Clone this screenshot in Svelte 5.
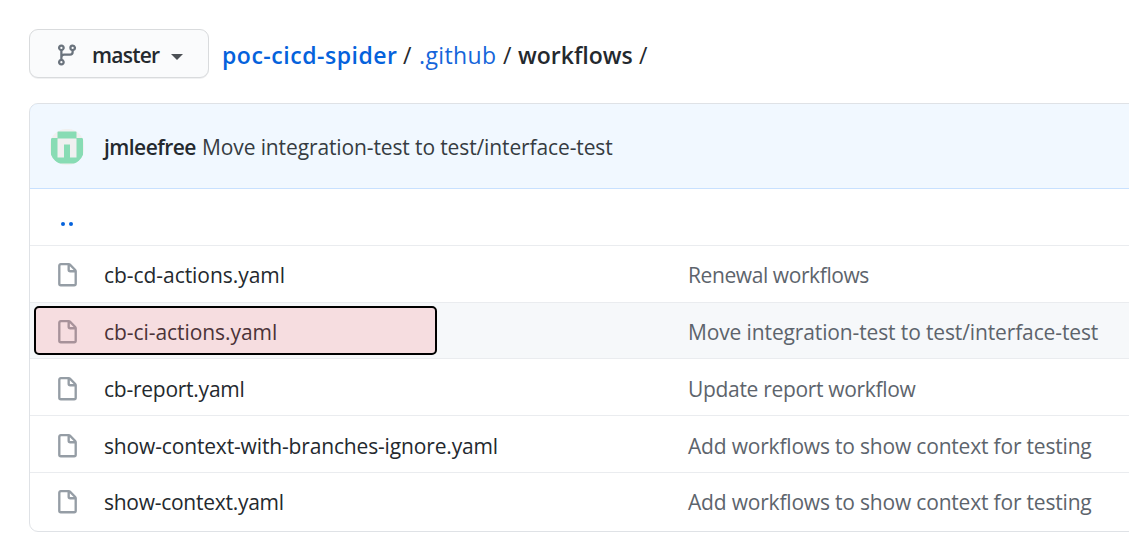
<script>
  const files = [
    { name: 'cb-cd-actions.yaml', message: 'Renewal workflows', ns: -0.05, ms: -0.41 },
    { name: 'cb-ci-actions.yaml', message: 'Move integration-test to test/interface-test', ns: -0.06, ms: -0.13, active: true },
    { name: 'cb-report.yaml', message: 'Update report workflow', ns: -0.25, ms: -0.32 },
    { name: 'show-context-with-branches-ignore.yaml', message: 'Add workflows to show context for testing', ns: -0.155, ms: -0.19 },
    { name: 'show-context.yaml', message: 'Add workflows to show context for testing', ns: -0.27, ms: -0.19 }
  ];
</script>

<main>
  <nav>
    <button>
      <svg class="branch" viewBox="0 0 16 16"><path fill-rule="evenodd" d="M11.75 2.5a.75.75 0 100 1.5.75.75 0 000-1.5zm-2.25.75a2.25 2.25 0 113 2.122V6A2.5 2.5 0 0110 8.5H6a1 1 0 00-1 1v1.128a2.251 2.251 0 11-1.5 0V5.372a2.25 2.25 0 111.5 0v1.836A2.492 2.492 0 016 7h4a1 1 0 001-1v-.628A2.25 2.25 0 019.5 3.25zM4.25 12a.75.75 0 100 1.5.75.75 0 000-1.5zM3.5 3.25a.75.75 0 111.5 0 .75.75 0 01-1.5 0z" /></svg>
      <b class="master">master</b>
      <i class="caret"></i>
    </button>
    <div class="crumbs">
      <a class="repo" href="#repo">poc-cicd-spider</a><span class="s1">/</span><a class="dir" href="#github">.github</a><span class="s2">/</span><b class="current">workflows</b><span class="s3">/</span>
    </div>
  </nav>

  <section>
    <header>
      <svg class="avatar" viewBox="0 0 34 36">
        <clipPath id="round"><rect width="34" height="36" rx="16" /></clipPath>
        <g clip-path="url(#round)">
          <rect width="34" height="36" fill="#f0f0f0" />
          <path fill="#88dcb4" d="M7.500 2.500h19v6.500h6.500v19.500l-6.500 6h-19l-6.500-6v-19.500h6.500zM7.500 9.500v19h6.500v-13h6v13h6.500v-19z" fill-rule="evenodd" />
        </g>
      </svg>
      <b class="author">jmleefree</b><span class="commit">Move integration-test to test/interface-test</span>
    </header>
    <div class="row up"><a href="#up" aria-label="Parent directory"><i></i><i></i></a></div>
    {#each files as f}
      <div class="row" class:active={f.active}>
        {#if f.active}<div class="mark"></div>{/if}
        <svg class="file" viewBox="0 0 16 16"><path fill-rule="evenodd" d="M3.75 1.5a.25.25 0 00-.25.25v11.500c0 .138.112.25.25.25h8.500a.25.25 0 00.25-.25V6H9.750A1.75 1.75 0 018 4.250V1.500H3.750zm5.750.56v2.190c0 .138.112.25.25.25h2.190L9.500 2.060zM2 1.750C2 .784 2.784 0 3.750 0h5.086c.464 0 .909.184 1.237.513l3.414 3.414c.329.328.513.773.513 1.237v8.086A1.750 1.750 0 0112.250 15h-8.500A1.750 1.750 0 012 13.250V1.750z" /></svg>
        <span class="name" style:letter-spacing="{f.ns}px">{f.name}</span>
        <span class="message" style:letter-spacing="{f.ms}px">{f.message}</span>
      </div>
    {/each}
  </section>
</main>

<style>
  :global(body) { background: #fff; overflow: hidden; }
  main { box-sizing: border-box; height: 535px; padding: 29px 0 0 29px; overflow: hidden; font: 21px/30px "Open Sans", "Noto Sans", sans-serif; color: #24292e; white-space: nowrap; }
  a { color: #0366d6; text-decoration: none; }
  b { font-weight: 600; }
  nav { display: flex; height: 50px; }
  button { box-sizing: border-box; display: flex; align-items: center; width: 180px; height: 49px; padding: 3px 0 0 25px; border: 1px solid #d9dbdd; border-radius: 9px; background: #fafbfc; box-shadow: 0 1px 0 #f0f1f2; font: inherit; color: inherit; }
  .branch { width: 24px; height: 24px; fill: #6a737d; }
  .master { width: 68px; margin-left: 13px; text-align: left; letter-spacing: -.75px; }
  .caret { margin: 4px 0 0 11px; border: 6px solid transparent; border-top-color: #4c5055; border-bottom: 0; }
  .crumbs { display: flex; align-items: center; margin-left: 13px; padding-top: 2px; font-size: 23px; }
  .repo { width: 181px; font-weight: 600; letter-spacing: .53px; color: #0562dc; }
  .s1 { width: 16px; }
  .dir { width: 84px; letter-spacing: .38px; color: #1565da; }
  .s2 { width: 15px; }
  .current { width: 121px; }
  section { width: 1160px; height: 429px; box-sizing: border-box; margin-top: 24px; border: 1px solid #dfe2e6; border-radius: 9px; overflow: hidden; }
  header { box-sizing: border-box; display: flex; align-items: center; height: 86px; margin: -1px -1px 0; padding: 1px 0 0 20px; background: #f1f8ff; border: 1px solid #c8e1ff; border-radius: 9px 9px 0 0; }
  .avatar { width: 34px; height: 36px; }
  .author { width: 98px; margin-left: 20px; letter-spacing: -.55px; }
  .commit { letter-spacing: -.12px; color: #363c42; }
  .row { position: relative; box-sizing: border-box; display: flex; align-items: center; height: 56.800px; padding: 3px 0 0 25px; border-bottom: 1px solid #eaecef; }
  .row:last-child { border: 0; padding-top: 2px; }
  .up a { display: flex; gap: 4px; padding: 11px 0 0 6px; }
  .up i { width: 4px; height: 4px; border-radius: 2px; background: #0562dc; }
  .active { background: #f6f8fa; }
  .file { width: 25px; height: 25px; margin-top: 1px; fill: #959da5; }
  .name { width: 584px; margin-left: 24px; }
  .message { color: #5d646c; }
  .mark { position: absolute; box-sizing: border-box; left: 4px; top: 3px; width: 403px; height: 49px; border: 2px solid #000; border-radius: 5px; background: rgba(247, 100, 108, .18); }
</style>
